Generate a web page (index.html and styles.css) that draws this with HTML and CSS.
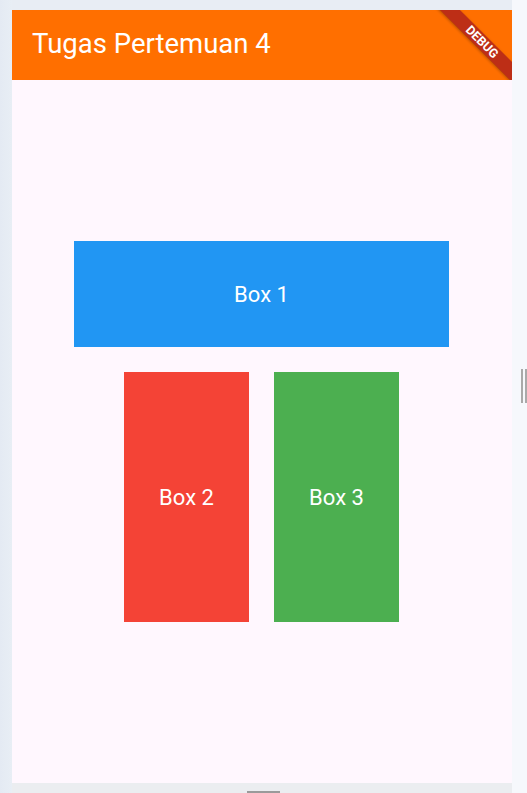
FILE: index.html
```html
<!DOCTYPE html>
<html>
<head>
<meta charset="utf-8">
<link rel="stylesheet" href="styles.css">
</head>
<body>
<div class="screen">
  <div class="gutter-left"></div>
  <div class="main">
    <div class="strip-top"></div>
    <div class="app">
      <header class="appbar">
        <h1 class="title">Tugas Pertemuan 4</h1>
        <div class="banner"><span>DEBUG</span></div>
      </header>
      <main class="content">
        <div class="box box-blue">Box 1</div>
        <div class="row">
          <div class="box box-red">Box 2</div>
          <div class="box box-green">Box 3</div>
        </div>
      </main>
    </div>
    <div class="strip-bottom"><div class="home-bar"></div></div>
  </div>
  <div class="gutter-right">
    <div class="resize"><i></i><i></i></div>
  </div>
</div>
</body>
</html>
```

FILE: styles.css
```css
html, body {
  margin: 0;
  padding: 0;
}
body {
  width: 527px;
  height: 793px;
  overflow: hidden;
  background: #e8edf4;
  font-family: Roboto, "Noto Sans", sans-serif;
}
.screen {
  display: flex;
  width: 527px;
  height: 793px;
}
.gutter-left {
  width: 12px;
  flex: none;
  background: linear-gradient(to right, #e4eaf3, #e8eef5);
}
.main {
  width: 500px;
  flex: none;
  display: flex;
  flex-direction: column;
}
.strip-top {
  height: 10px;
  background: #e8edf4;
}
.app {
  height: 773px;
  display: flex;
  flex-direction: column;
  overflow: hidden;
  position: relative;
  background: #fff7fe;
}
.appbar {
  height: 70px;
  flex: none;
  background: #ff6f00;
  display: flex;
  align-items: center;
  padding-left: 20px;
  position: relative;
  overflow: hidden;
}
.title {
  margin: 0;
  font-size: 27.5px;
  font-weight: 400;
  color: #ffffff;
  line-height: 1.17;
  margin-top: -2px;
}
.banner {
  position: absolute;
  left: 400px;
  top: 25px;
  width: 140px;
  height: 14px;
  transform: rotate(45deg);
  background: rgba(170, 28, 28, 0.78);
  box-shadow: 0 1px 3px rgba(0, 0, 0, 0.3);
  display: flex;
  align-items: center;
  justify-content: center;
}
.banner span {
  color: #ffffff;
  font-size: 12.5px;
  font-weight: 700;
  line-height: 14px;
}
.content {
  flex: 1;
  display: flex;
  flex-direction: column;
  align-items: center;
  justify-content: center;
  gap: 25px;
  padding-right: 1px;
}
.row {
  display: flex;
  gap: 25px;
}
.box {
  display: flex;
  align-items: center;
  justify-content: center;
  color: #ffffff;
  font-size: 22px;
  font-weight: 400;
}
.box-blue {
  width: 375px;
  height: 106px;
  background: #2196f3;
}
.box-red {
  width: 125px;
  height: 250px;
  background: #f44336;
}
.box-green {
  width: 125px;
  height: 250px;
  background: #4caf50;
}
.strip-bottom {
  height: 10px;
  background: #ebedf0;
  display: flex;
  justify-content: center;
  align-items: flex-end;
}
.home-bar {
  width: 33px;
  height: 2px;
  background: #9a9a9a;
  margin-left: 2px;
}
.gutter-right {
  flex: 1;
  background: #f6f8fc;
  display: flex;
  flex-direction: column;
  padding-top: 369px;
  padding-left: 9px;
}
.resize {
  display: flex;
  gap: 2px;
  height: 34px;
}
.resize i {
  display: block;
  width: 2px;
  height: 34px;
  background: #a9a9a9;
}
```
